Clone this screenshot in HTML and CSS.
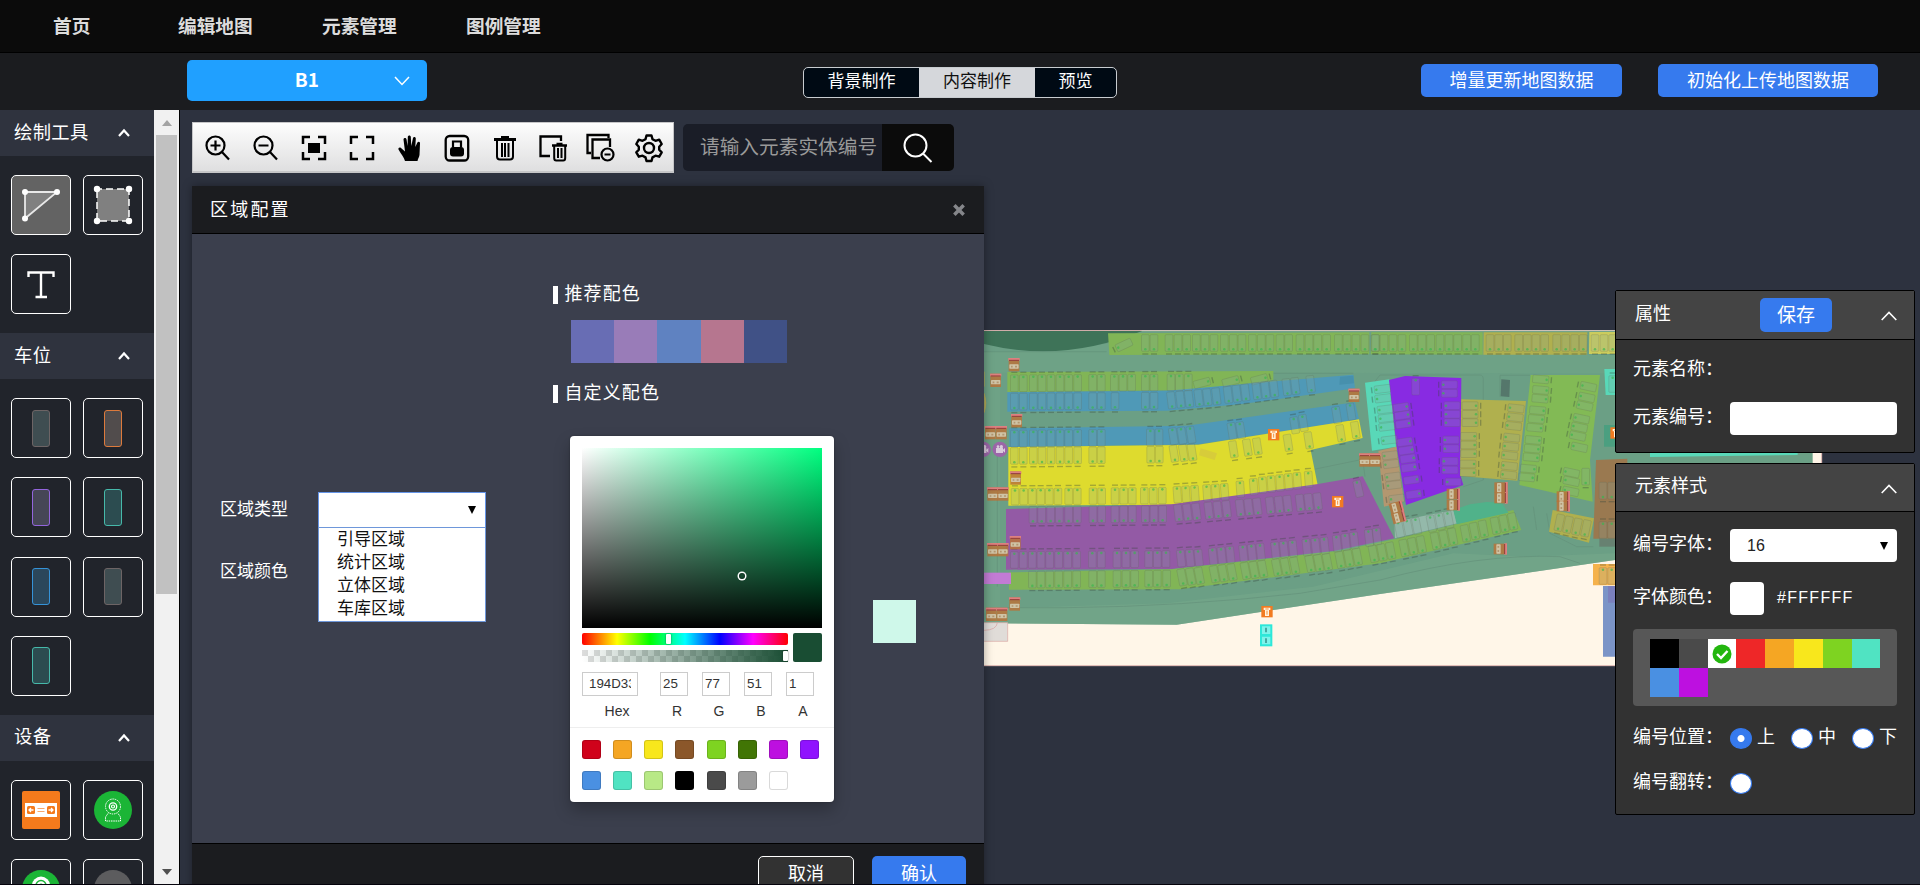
FILE: index.html
```
<!DOCTYPE html>
<html lang="zh-CN">
<head>
<meta charset="utf-8">
<title>地图编辑</title>
<link rel="stylesheet" href="styles.css">
</head>
<body>
<div class="app">
  <nav class="nav"><a>首页</a><a>编辑地图</a><a>元素管理</a><a>图例管理</a></nav>
  <header class="subbar">
    <div class="floor"><span>B1</span><svg class="floor-arrow" viewBox="0 0 16 10"><path d="M1 1l7 7.4L15 1"/></svg></div>
    <div class="tabs"><span>背景制作</span><span class="on">内容制作</span><span>预览</span></div>
    <div class="actions"><button class="primary inc">增量更新地图数据</button><button class="primary init">初始化上传地图数据</button></div>
  </header>
  <div class="work">
    <aside class="side">
      <div class="side-scroll">
        <h3 class="side-head first"><span>绘制工具</span><svg viewBox="0 0 14 10"><path d="M2 8l5-5.5L12 8"/></svg></h3>
        <div class="tiles tools">
          <div class="tile active"><svg viewBox="0 0 60 60"><path d="M14 17H46L14 43.500z" fill="#808080" stroke="#e8e8e8" stroke-width="1.800"/><g fill="#fff"><circle cx="14" cy="17" r="3"/><circle cx="46" cy="17" r="3"/><circle cx="14" cy="43.500" r="3"/></g></svg></div>
          <div class="tile"><svg viewBox="0 0 60 60"><rect x="14" y="14" width="32" height="32" fill="#808080" stroke="#fff" stroke-width="1.500" stroke-dasharray="7 4" stroke-dashoffset="2"/><g fill="#fff"><circle cx="14" cy="14" r="3.200"/><circle cx="46" cy="14" r="3.200"/><circle cx="14" cy="46" r="3.200"/><circle cx="46" cy="46" r="3.200"/></g></svg></div>
          <div class="tile"><svg viewBox="0 0 60 60"><path d="M17.500 23v-4.500h25V23M30 18.500V43M24.500 43h11.500" fill="none" stroke="#fff" stroke-width="2.400"/></svg></div>
        </div>
        <h3 class="side-head"><span>车位</span><svg viewBox="0 0 14 10"><path d="M2 8l5-5.500L12 8"/></svg></h3>
        <div class="tiles">
          <div class="tile"><i class="car gray"></i></div><div class="tile"><i class="car orange"></i></div>
          <div class="tile"><i class="car violet"></i></div><div class="tile"><i class="car teal"></i></div>
          <div class="tile"><i class="car blue"></i></div><div class="tile"><i class="car gray"></i></div>
          <div class="tile"><i class="car teal"></i></div>
        </div>
        <h3 class="side-head"><span>设备</span><svg viewBox="0 0 14 10"><path d="M2 8l5-5.500L12 8"/></svg></h3>
        <div class="tiles">
          <div class="tile"><svg viewBox="0 0 60 60"><rect x="11" y="11" width="38" height="38" rx="2" fill="#f47a1c"/><rect x="14" y="23" width="32" height="14" fill="#fff"/><rect x="16" y="26" width="8" height="8" rx="1.500" fill="#f47a1c"/><rect x="36" y="26" width="8" height="8" rx="1.500" fill="#f47a1c"/><path d="M22.500 30h-4.500m2-2l-2 2 2 2M37.500 30H42m-2-2l2 2-2 2" fill="none" stroke="#fff" stroke-width="1.300"/><path d="M26.500 28.500h7M26.500 31.500h7" stroke="#f9a86c" stroke-width="1.200"/></svg></div>
          <div class="tile"><svg viewBox="0 0 60 60"><circle cx="30" cy="30" r="19" fill="#1bb536"/><g fill="none" stroke="#fff"><circle cx="30" cy="26.500" r="7.500" stroke-dasharray="1.500 .8" stroke-width="1"/><circle cx="30" cy="26.500" r="3.700" stroke-width="1.300"/><circle cx="30" cy="26.500" r="1.500" stroke-width="1.200"/><path d="M25 33.500l-2.500 3.500v4h15v-4L35 33.500" stroke-dasharray="1.500 .8"/></g></svg></div>
          <div class="tile"><svg viewBox="0 0 60 60"><circle cx="30" cy="30" r="19" fill="#1bb536"/><circle cx="30" cy="26.500" r="9" fill="#fff"/><circle cx="30" cy="26.500" r="5" fill="none" stroke="#1bb536" stroke-width="1.500"/><circle cx="30" cy="26.500" r="2" fill="#1bb536"/></svg></div>
          <div class="tile"><svg viewBox="0 0 60 60"><circle cx="30" cy="30" r="19" fill="#5c5c5e"/><path d="M21 25h18v12H21z" fill="#77777c"/></svg></div>
        </div>
      </div>
      <div class="scrollbar"><b class="up"></b><b class="thumb"></b><b class="down"></b></div>
    </aside>
    <main class="canvas">
      <svg class="map" id="map" viewBox="12 0 2700 1050"></svg>
      <div class="topline">
        <div class="toolbar">
          <svg viewBox="0 0 30 30"><g fill="none" stroke="#000" stroke-width="2.200"><circle cx="12.500" cy="12.500" r="9"/><path d="M12.500 7.500v10M7.500 12.500h10M18.500 18.500l7.500 8"/></g></svg>
          <svg viewBox="0 0 30 30"><g fill="none" stroke="#000" stroke-width="2.200"><circle cx="12.500" cy="12.500" r="9"/><path d="M7.500 12.500h10M18.500 18.500l7.500 8"/></g></svg>
          <svg viewBox="0 0 30 30"><path d="M4 11V4h7M19 4h7v7M26 19v7h-7M11 26H4v-7" fill="none" stroke="#000" stroke-width="2.500"/><path d="M9 10h12v10H9z"/></svg>
          <svg viewBox="0 0 30 30"><path d="M4 11V4h7M19 4h7v7M26 19v7h-7M11 26H4v-7" fill="none" stroke="#000" stroke-width="2.500"/></svg>
          <svg viewBox="0 0 30 30"><path d="M10 28c-1-4-4-7-6.500-11.500-.5-1.500 1-2.500 2.500-1.500l4 3.500L8.500 6.500c0-2 2.600-2 3-.3L12.600 13l.2-9c.2-2 2.900-2 3 0l.5 9L18 5c.5-1.800 3-1.200 2.800.7L20.300 14l2.100-4.500c.8-1.500 3-.7 2.600 1L24.500 22c-.5 2.500-1.500 3.500-2 6z"/></svg>
          <svg viewBox="0 0 30 30"><rect x="3.700" y="3" width="22.500" height="24.500" rx="4" fill="none" stroke="#000" stroke-width="2.300"/><path d="M11 14.500V8.500h8v6" fill="none" stroke="#000" stroke-width="2.200"/><rect x="8" y="14" width="14" height="9.500" rx="3"/></svg>
          <svg viewBox="0 0 30 30"><path d="M4 6.500h22M11 4.500h8" stroke="#000" stroke-width="3"/><path d="M7 8v15.500q0 3 3 3h10q3 0 3-3V8M12 10v14M15 10v14M18.500 10v14" fill="none" stroke="#000" stroke-width="2"/></svg>
          <svg viewBox="0 0 30 30"><path d="M12 23H2.500V3.500H23V8" fill="none" stroke="#000" stroke-width="2.300"/><path d="M14 12.500h15M18.500 10.800h6" stroke="#000" stroke-width="2.300"/><path d="M16.200 13v12q0 2.500 2 2.500h7q2 0 2-2.500V13M20 15v10M23.500 15v10" fill="none" stroke="#000" stroke-width="2"/></svg>
          <svg viewBox="0 0 30 30"><path d="M5 20H1.500V2h21v3" fill="none" stroke="#000" stroke-width="2.300"/><path d="M14 25H6.500V6.500H24V14" fill="none" stroke="#000" stroke-width="2.300"/><circle cx="21.500" cy="21.500" r="6" fill="none" stroke="#000" stroke-width="2.200"/><path d="M18.500 21.500h6" stroke="#000" stroke-width="2"/></svg>
          <svg viewBox="0 0 30 30"><path d="M12.500 2.500h5l1 3.700 3 1.600 3.700-1.100 2.500 4.300-2.500 2.700v3l2.500 2.700-2.500 4.300-3.700-1-3 1.700-1 3.600h-5l-1-3.600-3-1.700-3.700 1-2.500-4.300 2.500-2.700v-3L2.300 11l2.500-4.300 3.700 1.100 3-1.600z" fill="none" stroke="#000" stroke-width="2.400" stroke-linejoin="round"/><circle cx="15" cy="15" r="5" fill="none" stroke="#000" stroke-width="2.400"/></svg>
        </div>
        <div class="search"><div class="search-in">请输入元素实体编号</div><div class="search-btn"><svg viewBox="0 0 30 30"><circle cx="12.500" cy="12.500" r="11" /><path d="M20 20.500l8.500 8.500"/></svg></div></div>
      </div>

      <section class="dialog">
        <header class="dlg-head"><span>区域配置</span><svg viewBox="0 0 12 12"><path d="M2 2l8 8M10 2l-8 8"/></svg></header>
        <div class="dlg-body">
          <div class="form">
            <div class="field"><label>区域类型</label>
              <div class="select"><b class="caret"></b>
                <ul class="menu"><li>引导区域</li><li>统计区域</li><li>立体区域</li><li>车库区域</li></ul>
              </div>
            </div>
            <div class="field"><label>区域颜色</label></div>
          </div>
          <div class="palette">
            <h4>推荐配色</h4>
            <div class="themes"><i class="t1"></i><i class="t2"></i><i class="t3"></i><i class="t4"></i><i class="t5"></i></div>
            <h4>自定义配色</h4>
            <div class="picker-line">
              <div class="picker">
                <div class="pk-top">
                  <div class="sat"><i class="sat-dot"></i></div>
                  <div class="bars"><div class="strips"><div class="hue"><i></i></div><div class="alpha"><i></i></div></div><div class="current"></div></div>
                  <div class="inputs">
                    <div class="hex"><div class="inp"><div class="clip">194D33</div></div><em>Hex</em></div>
                    <div class="num r"><div class="inp">25</div><em>R</em></div>
                    <div class="num"><div class="inp">77</div><em>G</em></div>
                    <div class="num"><div class="inp">51</div><em>B</em></div>
                    <div class="num"><div class="inp">1</div><em>A</em></div>
                  </div>
                </div>
                <div class="presets" id="presets"></div>
              </div>
              <div class="chosen"></div>
            </div>
          </div>
        </div>
        <footer class="dlg-foot"><button class="cancel">取消</button><button class="primary ok">确认</button></footer>
      </section>

      <div class="panels">
        <section class="panel attrs">
          <header><span>属性</span><button class="primary save">保存</button><svg viewBox="0 0 16 10"><path d="M.7 9L8 1.500 15.300 9"/></svg></header>
          <div class="line name"><label>元素名称：</label></div>
          <div class="line code"><label>元素编号：</label><div class="box"></div></div>
        </section>
        <section class="panel style">
          <header><span>元素样式</span><svg viewBox="0 0 16 10"><path d="M.7 9L8 1.500 15.300 9"/></svg></header>
          <div class="line l1"><label>编号字体：</label><div class="box sel"><span>16</span><b class="caret"></b></div></div>
          <div class="line l2"><label>字体颜色：</label><div class="colorbox"></div><span class="hexval">#FFFFFF</span></div>
          <div class="colors" id="colors"></div>
          <div class="line l3"><label>编号位置：</label><span class="radio on"></span><em>上</em><span class="radio"></span><em>中</em><span class="radio"></span><em>下</em></div>
          <div class="line l4"><label>编号翻转：</label><span class="radio"></span></div>
        </section>
      </div>
    </main>
  </div>
  <div class="bottomline"></div>
</div>
<script src="app.js"></script>
</body>
</html>
```
FILE: styles.css
```
* { box-sizing: border-box; margin: 0; padding: 0; }
body { font-family: "Liberation Sans", "Noto Sans CJK SC", sans-serif; background: #0b0b0b; overflow: hidden; }
i, em { font-style: normal; }
ul { list-style: none; }
button { font: inherit; border: 0; display: block; }
svg { display: block; flex: none; }
.app { width: 1920px; height: 885px; display: flex; flex-direction: column; overflow: hidden; }
.bottomline { height: 1px; background: #05030c; flex: none; }
.primary { background: #367aee; color: #fff; border-radius: 5px; font-size: 18px; }

/* Header bars */
.nav { height: 53px; flex: none; background: #0b0b0b; border-bottom: 1px solid #000; display: flex; padding-left: 53px; color: #dcdcdc; font-size: 18.7px; font-weight: bold; line-height: 53px; }
.nav a:nth-child(1) { width: 125px; }
.nav a { width: 144px; }
.subbar { height: 57px; flex: none; background: #1b1c1f; display: flex; align-items: flex-start; padding-left: 187px; }
.floor { width: 240px; height: 41px; margin-top: 7px; background: #20a0ff; border-radius: 5px; color: #fff; font-family: "Noto Sans CJK SC", sans-serif; font-size: 19px; font-weight: bold; display: flex; align-items: center; justify-content: flex-end; padding-right: 17px; gap: 75px; line-height: 38px; }
.floor span { margin-top: -3px; }
.floor-arrow { width: 16px; height: 10px; fill: none; stroke: #fff; stroke-width: 1.5; }
.tabs { margin: 14px 0 0 376px; width: 314px; height: 31px; border: 1px solid #c8ccd0; border-radius: 5px; overflow: hidden; display: flex; background: #000a14; color: #fff; font-size: 17px; line-height: 27px; text-align: center; }
.tabs span { width: 115px; }
.tabs span:last-child { flex: 1; }
.tabs .on { width: 116px; background: #d5d7db; color: #101010; }
.actions { margin: 11px 0 0 304px; display: flex; gap: 36px; }
.actions button { height: 33px; line-height: 32px; }
.inc { width: 201px; }
.init { width: 220px; }

.work { flex: 1; min-height: 0; display: flex; }

/* Sidebar */
.side { width: 180px; flex: none; display: flex; border-right: 1px solid #000; background: #21242b; }
.side-scroll { width: 154px; overflow: hidden; }
.side-head { height: 46px; background: #2f333e; display: flex; justify-content: space-between; align-items: center; padding: 0 23px 0 14px; color: #fff; font-size: 18.3px; font-weight: normal; line-height: 42px; letter-spacing: .4px; }
.side-head span { height: 43px; }
.side-head svg { width: 14px; height: 10px; fill: none; stroke: #fff; stroke-width: 2.2; }
.tiles { display: grid; grid-template-columns: 60px 60px; column-gap: 12px; row-gap: 19.2px; padding: 19px 0 19px 11px; }
.tile { height: 60px; border: 1px solid #fff; border-radius: 5px; display: flex; align-items: center; justify-content: center; }
.tile svg { width: 60px; height: 60px; }
.tile.active { background: #636363; }
.car { width: 18px; height: 37px; border-radius: 3px; border: 1px solid; }
.car.gray { background: #3f4d51; border-color: #6d6465; }
.car.orange { background: #514c4c; border-color: #dd7a3c; }
.car.violet { background: #464656; border-color: #9365dd; }
.car.teal { background: #2c4c50; border-color: #46b9aa; }
.car.blue { background: #2b475b; border-color: #3593d8; }
.scrollbar { width: 25px; background: #f1f1f1; display: flex; flex-direction: column; align-items: center; }
.up, .down { border: 5.5px solid transparent; width: 0; height: 0; }
.up { border-bottom: 6px solid #a3a3a3; margin-top: 5px; }
.down { border-top: 6px solid #505050; margin-top: auto; margin-bottom: 4px; }
.thumb { width: 21px; height: 459px; background: #c1c1c1; margin-top: 8.5px; }

/* Canvas */
.canvas { flex: 1; position: relative; background: #2d323f; overflow: hidden; }
.map { position: absolute; left: 804px; top: 210px; width: 900px; height: 350px; }
.topline { display: flex; padding: 12px 0 0 12px; position: relative; }
.toolbar { width: 482px; height: 51px; border: 1px solid #c6c6c8; border-bottom-width: 2px; background: linear-gradient(#fdfdfd, #dfdfe0); display: flex; align-items: center; gap: 17.9px; padding: 1px 0 0 10px; }
.toolbar svg { width: 30px; height: 30px; }
.search { display: flex; margin: 2px 0 0 9px; width: 271px; height: 47px; border-radius: 5px; overflow: hidden; }
.search-in { width: 199px; background: #1a1d27; color: #999; font-size: 19.7px; line-height: 46px; padding-left: 17px; white-space: nowrap; overflow: hidden; }
.search-btn { flex: 1; background: #0b0b0b; display: flex; align-items: center; justify-content: center; }
.search-btn svg { width: 30px; height: 30px; fill: none; stroke: #fff; stroke-width: 2; }

/* Dialog */
.dialog { position: absolute; left: 12px; top: 76px; width: 792px; height: 720px; background: #3b3f4d; box-shadow: 0 0 9px rgba(0,0,0,.35); color: #fff; }
.dlg-head { height: 48px; background: #1b1c1f; border-bottom: 1px solid #000; display: flex; justify-content: space-between; align-items: center; padding: 0 19px 0 18px; font-size: 18px; letter-spacing: 2.2px; line-height: 46px; }
.dlg-head svg { width: 14px; height: 14px; margin-right: -1px; stroke: #85868a; stroke-width: 3; }
.dlg-body { height: 609px; display: flex; }
.form { width: 361px; padding: 258px 0 0 28px; font-size: 17px; }
.field { display: flex; height: 62px; line-height: 35px; }
.field label { width: 98px; }
.select { width: 168px; height: 36px; background: #fff; border: 1px solid #6595e8; position: relative; display: flex; align-items: center; justify-content: flex-end; padding-right: 9px; }
.caret { border: 4px solid transparent; border-top: 8px solid #000; border-bottom: 0; }
.menu { position: absolute; left: 0; top: 34px; width: 168px; height: 95px; margin-left: -1px; background: #fff; border: 1px solid #6e97da; color: #111; padding-left: 18px; line-height: 23px; }
.palette { padding-top: 48px; }
.palette h4 { font-weight: normal; font-size: 18px; letter-spacing: 1.1px; line-height: 25px; height: 24px; display: flex; align-items: center; gap: 6.5px; }
.palette h4::before { content: ""; width: 5px; height: 18px; background: #fff; margin-top: 1px; }
.themes { display: flex; margin: 14px 0 18px 18px; width: 216px; height: 43px; }
.themes i { flex: 1; }
.t1 { background: #686db4; } .t2 { background: #997cb8; } .t3 { background: #5f82c1; } .t4 { background: #b6768f; } .t5 { background: #405186; }
.picker-line { display: flex; margin: 31px 0 0 17px; }
.picker { width: 264px; height: 366px; background: #fff; border-radius: 4px; box-shadow: 0 0 2px rgba(0,0,0,.3), 0 8px 16px rgba(0,0,0,.25); color: #222; }
.pk-top { padding: 12px 12px 0; height: 291px; }
.sat { height: 180px; background: linear-gradient(to top, #000, transparent), linear-gradient(to right, #fff, #00ff80); position: relative; }
.sat-dot { position: absolute; left: 157px; top: 125px; width: 6px; height: 6px; border-radius: 50%; box-shadow: 0 0 0 1.5px #fff, inset 0 0 1px 1px rgba(0,0,0,.3); }
.bars { display: flex; gap: 5px; padding-top: 5px; }
.strips { width: 206px; display: grid; gap: 5px; }
.hue { height: 12px; border-radius: 2px; background: linear-gradient(to right, #f00 0%, #ff0 17%, #0f0 33%, #0ff 50%, #00f 67%, #f0f 83%, #f00 100%); padding: 1px 0 0 84px; }
.hue i, .alpha i { display: block; width: 5px; height: 10px; background: #fff; border-radius: 1px; box-shadow: 0 0 2px rgba(0,0,0,.6); }
.alpha { height: 12px; padding: 1px 0 0 201px; background: linear-gradient(to right, rgba(25,77,51,0), #194d33), repeating-conic-gradient(#fff 0 25%, #ddd 0 50%) 0 0 / 12px 12px; }
.current { width: 29px; height: 29px; border-radius: 2px; background: #194d33; }
.inputs { display: flex; gap: 14px; margin-top: 10px; font-size: 13.33px; line-height: 22px; }
.inputs em { display: block; text-align: center; margin-top: 4px; color: #333; font-size: 14px; }
.hex { width: 56px; }
.hex .inp { padding: 0 6px; }
.clip { overflow: hidden; }
.hex em { padding-left: 14px; }
.num { width: 28px; }
.num em { padding-left: 6px; }
.num.r { margin-left: 8px; }
.inp { height: 24px; border: 1px solid #ccc; padding-left: 2px; white-space: nowrap; overflow: hidden; color: #333; }
.presets { border-top: 1px solid #eee; display: grid; grid-template-columns: repeat(8, 19px); gap: 12px 12.15px; padding: 12px; }
.presets i { height: 19px; border-radius: 3px; box-shadow: inset 0 0 0 1px rgba(0,0,0,.15); }
.chosen { width: 43px; height: 43px; background: #cff8ea; margin: 164px 0 0 39px; }
.dlg-foot { background: #1b1c1f; border-top: 1px solid #000; height: 63px; display: flex; justify-content: flex-end; gap: 18px; padding: 12px 18px 0 0; font-size: 18px; }
.dlg-foot button { height: 36px; line-height: 34px; border-radius: 5px; }
.cancel { width: 96px; background: #323232; color: #fff; border: 1px solid #fff; }
.ok { width: 94px; }

/* Property panels */
.panels { position: absolute; right: 5px; top: 180px; width: 300px; display: grid; gap: 10px; color: #fff; font-size: 18px; }
.panel { border: 1px solid #000; background: #323232; border-radius: 2px; min-width: 0; }
.attrs { height: 163px; }
.style { height: 352px; }
.panel header { height: 48px; background: #444; border-bottom: 1px solid #000; display: flex; align-items: center; padding: 0 17px 0 19px; line-height: 40px; }
.attrs header { height: 49px; }
.panel header span { flex: none; height: 43px; }
.panel header svg { width: 16px; height: 10px; margin: 2px 0 0 auto; fill: none; stroke: #fff; stroke-width: 1.6; }
.save { width: 72px; height: 34px; line-height: 31px; margin-left: 89px; font-size: 19px; }
.line { display: flex; align-items: center; padding-left: 17px; height: 33px; line-height: 33px; }
.line label { width: 97px; flex: none; white-space: nowrap; margin-top: -3px; }
.name { margin-top: 14px; }
.code { margin-top: 15px; }
.box { width: 167px; height: 33px; background: #fff; border-radius: 4px; }
.sel { display: flex; align-items: center; justify-content: space-between; padding: 0 9px 0 17px; color: #222; font-size: 16px; }
.l1 { margin-top: 17px; }
.l2 { margin-top: 20px; }
.colorbox { width: 34px; height: 33px; background: #fff; border-radius: 4px; margin-right: 13px; }
.hexval { font-size: 16px; letter-spacing: 1.3px; margin-top: -3px; }
.colors { margin: 14px 17px 0; height: 77px; background: #575757; border-radius: 4px; padding: 10px 17px; display: grid; grid-template-columns: repeat(8, 28.8px); grid-auto-rows: 29px; }
.colors i { display: flex; align-items: center; justify-content: center; }
.colors svg { width: 20px; height: 20px; }
.l3 { margin-top: 16px; }
.l4 { margin-top: 12px; }
.radio { width: 22px; height: 21px; flex: none; border-radius: 50%; background: #fff; border: 1px solid #367aee; }
.radio.on { background: radial-gradient(circle, #fff 3px, #367aee 4px); }
.line em { margin: -3px 16px 0 5px; width: 18px; flex: none; }
.line em:last-child { margin-right: 0; }
```
FILE: app.js
```
var presets = ['#d0021b','#f5a623','#f8e71c','#8b572a','#7ed321','#417505','#bd10e0','#9013fe','#4a90e2','#50e3c2','#b8e986','#000','#4a4a4a','#9b9b9b','#fff'];
document.getElementById('presets').innerHTML = presets.map(function (c) { return '<i style="background:' + c + '"></i>'; }).join('');

var fonts = ['#000','#4a4a4a','#fff','#ee2728','#f5a623','#f8e71c','#7ed321','#50e3c2','#4a90e2','#bd10e0'];
document.getElementById('colors').innerHTML = fonts.map(function (c, i) {
  var tick = i === 2 ? '<svg viewBox="0 0 20 20"><circle cx="10" cy="10" r="9.500" fill="#23b60e"/><path d="M5 10l4 4 6.500-7" fill="none" stroke="#fff" stroke-width="2.400"/></svg>' : '';
  return '<i style="background:' + c + '">' + tick + '</i>';
}).join('');

/* Parking map, three units per pixel */
var out = [];
function poly(fill, pts, extra) { out.push('<polygon fill="' + fill + '" points="' + pts + '" ' + (extra || '') + '/>'); }
function path(d, stroke, fill) { out.push('<path d="' + d + '" stroke="' + (stroke || 'none') + '" fill="' + (fill || 'none') + '" stroke-width="2"/>'); }

poly('#fff6e8', '0,32 2525,32 2525,1037 0,1037', 'stroke="#e5bcb6" stroke-width="3"');
poly('#6b9f85', '0,33 2498,33 2498,640 1905,720 1200,822 590,914 0,910');
poly('#72a588', '0,95 210,95 390,70 390,105 1905,105 1905,160 880,158 60,158 60,880 0,880', 'opacity=".5"');
poly('#75a98a', '60,865 560,850 1000,800 1420,700 1640,710 1905,700 1905,720 1200,822 590,914 0,910', 'opacity=".6"');
path('M12 33V72Q250 130 486 33z', 'none', '#3e7358');
path('M12 95H380M30 863H260Q600 860 960 820L1200 780Q1500 700 1740 710L1800 730M52 400V800M880 160H1120M1002 448L1148 418L1155 470M1180 190L1200 165H1500Q1510 165 1510 180V480L1450 500M1560 230V166H1650M1660 560L1670 630M1700 580L1710 640L1790 680H1840', '#64917a');
path('M485 32H2500', '#c9cfc0');
poly('#e0dcd8', '0,908 83,908 83,964 0,964', 'stroke="#d9a8a5" stroke-width="2"');
path('M12 931Q50 930 52 908', '#d99f9d');

var G = '#81b556', B = '#4f99b7', Y = '#dedb2e', P = '#935aa5', O = '#b0b04e', T = '#59d8b8';
poly(G, '384,40 1168,37 1168,103 388,105');
poly(G, '1174,37 1508,37 1508,104 1172,103');
poly(O, '1511,37 1822,37 1820,104 1510,104');
poly('#cbcc5d', '1828,36 1990,36 1990,102 1827,102');
poly(G, '82,156 880,153 880,180 640,210 82,216');
poly(B, '82,217 560,212 1120,164 1125,205 780,253 560,272 82,275');
poly(B, '88,325 620,317 1125,247 1137,298 655,373 88,381');
poly(Y, '85,381 655,374 1137,298 1148,354 992,390 1014,500 575,554 85,557');
poly(P, '78,567 575,553 1014,492 1148,469 1243,655 1060,693 575,747 78,749');
poly(G, '87,757 575,748 1080,692 1243,658 1600,570 1624,630 1200,730 600,808 87,809');
poly('#c27bd4', '0,758 93,758 93,792 0,792');
poly(T, '1155,188 1228,178 1248,380 1176,392');
poly('#882be2', '1227,180 1275,168 1444,174 1441,465 1450,495 1278,555 1250,380');
poly('#b39770', '1195,393 1249,380 1272,545 1212,560');
poly(O, '1444,238 1638,243 1612,482 1440,468');
poly('#82ba55', '1652,165 1860,165 1830,420 1838,545 1618,495');
poly('#94b9aa', '1243,605 1420,570 1432,610 1245,655');
poly('#50b28a', '1420,570 1470,553 1520,546 1565,548 1585,578 1430,613');
poly(O, '1718,570 1842,595 1827,668 1707,635');
poly(T, '1873,147 1990,147 1990,225 1877,225');
poly('#4b9f80', '1872,315 1990,315 1990,380 1872,380');
poly('#9a7950', '1848,420 1942,416 1942,656 1840,656');
poly('#678171', '1858,656 1942,656 1942,680 1858,680');
poly('#f5b24c', '1839,732 1990,732 1990,796 1839,796');
poly('#7b94c7', '1869,798 1990,798 1990,1010 1869,1010');
poly('#7b80bd', '1884,798 1990,798 1990,848 1884,848');
poly(T, '2010,396 2453,396 2453,405 2010,411');
poly('#55776b', '1564,178 1590,180 1588,231 1562,229');
poly('#d7cc3a', '662,385 711,400 704,420 657,406');
poly('#4790ad', '1080,170 1120,167 1122,190 1078,194');

function stall(cx, cy, w, h, rot, end) {
  var y = end === 't' ? -h / 2 + 6 : h / 2 - 6, l = end === 't' ? -h / 2 - 8 : h / 2 + 8;
  out.push('<g transform="translate(' + cx + ' ' + cy + ') rotate(' + rot + ')">' +
    '<rect x="' + -w / 2 + '" y="' + -h / 2 + '" width="' + w + '" height="' + h + '" rx="3" fill="#86a8a0" fill-opacity=".22" stroke="#5f6a58" stroke-opacity=".32" stroke-width="2"/>' +
    '<circle cy="' + y + '" r="3.800" fill="#35b84d" fill-opacity=".65"/>' +
    '<path d="M-9 ' + l + 'h18" stroke="#38483c" stroke-opacity=".36" stroke-width="4"/></g>');
}
/* a row of stalls whose centre line is interpolated between the given points */
function row(xs, line, rot, end, h) {
  xs.forEach(function (x) {
    var i = 0;
    while (i < line.length - 2 && x > line[i + 1][0]) i++;
    var a = line[i], b = line[i + 1], t = (x - a[0]) / (b[0] - a[0]);
    stall(x, a[1] + (b[1] - a[1]) * t, 23, h || 50, x > 570 ? rot : 0, end);
  });
}
function col(pts, rot, end, h) { pts.forEach(function (p) { stall(p[0], p[1], 23, h || 50, rot, end); }); }

row([496,522,567,594,620,649,675,702,733,760,786,817,844,870,900,926,960,987,1013,1040,1075,1101,1128,1155,1187], [[400,69],[1190,69]], 0, 'b');
row([1185,1212,1239,1266,1300,1326,1352,1380,1407,1433,1460,1486], [[1080,69],[1500,69]], 0, 'b');
row([1530,1556,1582,1616,1642,1668,1694,1730,1757,1784,1810,1845,1872,1898], [[1500,69],[1900,69]], 0, 'b');
col([[432,75]], 65, 'b');
row([103,130,160,186,213,240,266,293,338,364,403,429,455,496,522,573,598,625], [[80,190],[640,187]], 0, 't');
col([[666,189],[752,184],[838,178]], -105, 'b');
row([103,130,160,186,213,240,266,293,338,364,405,496,522,574,601,627,656,682,709,744,770,796,830,856,882,920,946,992], [[80,245],[560,242],[700,230],[992,192]], -7, 'b');
row([103,130,160,186,213,240,266,293,338,364,511,537,580,606,633,756,782,944,970,1070,1113], [[80,356],[540,352],[640,344],[782,331],[944,316],[970,309],[1113,275]], -9, 't');
row([103,130,160,186,213,240,266,293,338,364,512,538,582,610,636,760,802,832,924,986,1082,1126], [[80,408],[538,404],[636,397],[760,388],[832,379],[986,361],[1126,330]], -9, 'b');
row([105,131,157,182,208,234,266,292,339,365,405,431,457,493,520,547,592,618,645,681,707,734,781,821,848,874,900,926,952,986], [[100,530],[540,527],[740,515],[850,495],[986,478]], -4, 't', 49);
row([159,185,212,238,266,292,339,365,405,431,457,496,522,548,595,622,649,686,713,740,780,806,832,870,897,923,960,986,1013], [[100,585],[548,582],[650,575],[1013,544]], -7, 'b');
row([103,130,157,183,209,236,263,290,337,364,411,438,464,506,532,558,603,630,656,699,725,751,790,816,842,886,912,939,980,1007,1034,1071,1097,1123,1167,1191], [[100,720],[560,717],[660,713],[1034,677],[1200,648]], -6, 't');
row([157,183,209,236,263,290,338,364,411,438,464,506,532,560,606,632,658,703,729,756,796,822,848,890,916,944,990,1016,1042,1080,1106,1132,1180,1206,1232,1272,1298,1324,1366,1392,1418,1456,1483,1510,1546,1572,1598], [[100,779],[560,776],[660,767],[1042,726],[1206,697],[1330,672],[1598,604]], -11, 'b');
col([[1135,506]], -13, 't');
col([[1258,628],[1284,622],[1310,618],[1354,611],[1380,605],[1406,599]], -11, 't');
col([[1207,207],[1209,235],[1216,268],[1219,294],[1221,320],[1228,360]], -97, 't', 48);
col([[1230,406],[1233,432],[1238,470],[1241,495],[1250,536]], -97, 't', 46);
col([[1263,262],[1267,286],[1270,312],[1274,366],[1279,391],[1284,416],[1287,443],[1294,480],[1301,523]], 82, 't', 46);
col([[1307,200]], 0, 't');
col([[1408,194],[1408,220],[1416,257],[1416,283],[1416,308],[1413,360],[1413,386],[1410,424],[1410,450],[1420,486]], -90, 't', 48);
col([[1470,257],[1470,283],[1470,308],[1466,349],[1466,375],[1466,401],[1464,432],[1464,458]], 90, 't', 48);
col([[1608,265],[1605,292],[1600,318],[1595,353],[1592,380],[1589,407],[1588,438],[1586,465]], -84, 't', 48);
col([[1682,178],[1682,210],[1680,236],[1673,271],[1669,297],[1665,323],[1660,360],[1657,386],[1654,412],[1645,446],[1640,472]], 95, 't', 48);
col([[1825,200],[1820,232],[1814,258],[1804,296],[1798,322],[1793,348],[1798,382],[1774,458],[1774,484],[1772,514]], -78, 't', 48);
col([[1817,470]], 0, 'b');
col([[1738,608],[1764,614],[1791,620],[1818,625]], 12, 'b');
col([[1869,512],[1895,512]], 0, 'b');
col([[1869,630],[1895,630],[1869,768],[1895,768],[1898,192]], 0, 't');

function booth(x, y, rot) {
  out.push('<g transform="translate(' + x + ' ' + y + ') rotate(' + (rot || 0) + ')"><rect x="-16" y="-20" width="32" height="40" fill="#b8733a" fill-opacity=".85"/><rect x="-17" y="-20" width="34" height="8" fill="#dd8080"/><path d="M-15 -13h30" stroke="#8e3c34" stroke-width="3"/><rect x="-14" y="-1" width="28" height="13" rx="2" fill="#cfc4a6"/><path d="M-9 6h5M3 6h6" stroke="#b39670" stroke-width="5"/></g>');
}
[[102,134],[47,181],[110,302],[31,338],[64,338],[107,474],[38,522],[69,522],[106,668],[38,689],[69,689],[104,852],[34,883],[66,883],[1122,226],[1154,420],[1185,420]].forEach(function (b) { booth(b[0], b[1]); });
[[1420,522],[1420,555],[1563,503],[1563,534],[1750,530],[1750,558],[1561,687]].forEach(function (b) { booth(b[0], b[1], 90); });
booth(1249,562,75); booth(1256,592,75);

function sign(x, y) {
  out.push('<g transform="translate(' + x + ' ' + y + ')"><rect x="-17" y="-17" width="34" height="34" fill="#f27b21"/><path d="M-10 -12H10V-5H6V13H-6V-5H-10z" fill="#fff5df"/><path d="M-5 -8H5M0 -3V9" stroke="#f27b21" stroke-width="2.500"/></g>');
}
[[881,344],[1073,545],[861,875],[1908,339]].forEach(function (s) { sign(s[0], s[1]); });

out.push('<rect x="840" y="913" width="37" height="66" fill="#2de8d9"/><path d="M846 919h25v23h-25zM846 950h25v23h-25z" fill="#7df4eb"/><path d="M858 923v14M858 955v14" stroke="#3a9a95" stroke-width="5"/>');
[10,60].forEach(function (x) { out.push('<g transform="translate(' + x + ' 388)"><circle r="23" fill="#9b66a8"/><path d="M-12 -4H9V11H-12zM9 1l6 -5V10l-6 -5z" fill="#d9cbdc"/><circle cx="-6" cy="-8" r="4" fill="#d9cbdc"/><circle cx="4" cy="-8" r="5" fill="#d9cbdc"/></g>'); });
path('M13 155V200M13 220Q22 250 13 278', '#c0aa50', '#c0aa50');
document.getElementById('map').innerHTML = out.join('');
```
